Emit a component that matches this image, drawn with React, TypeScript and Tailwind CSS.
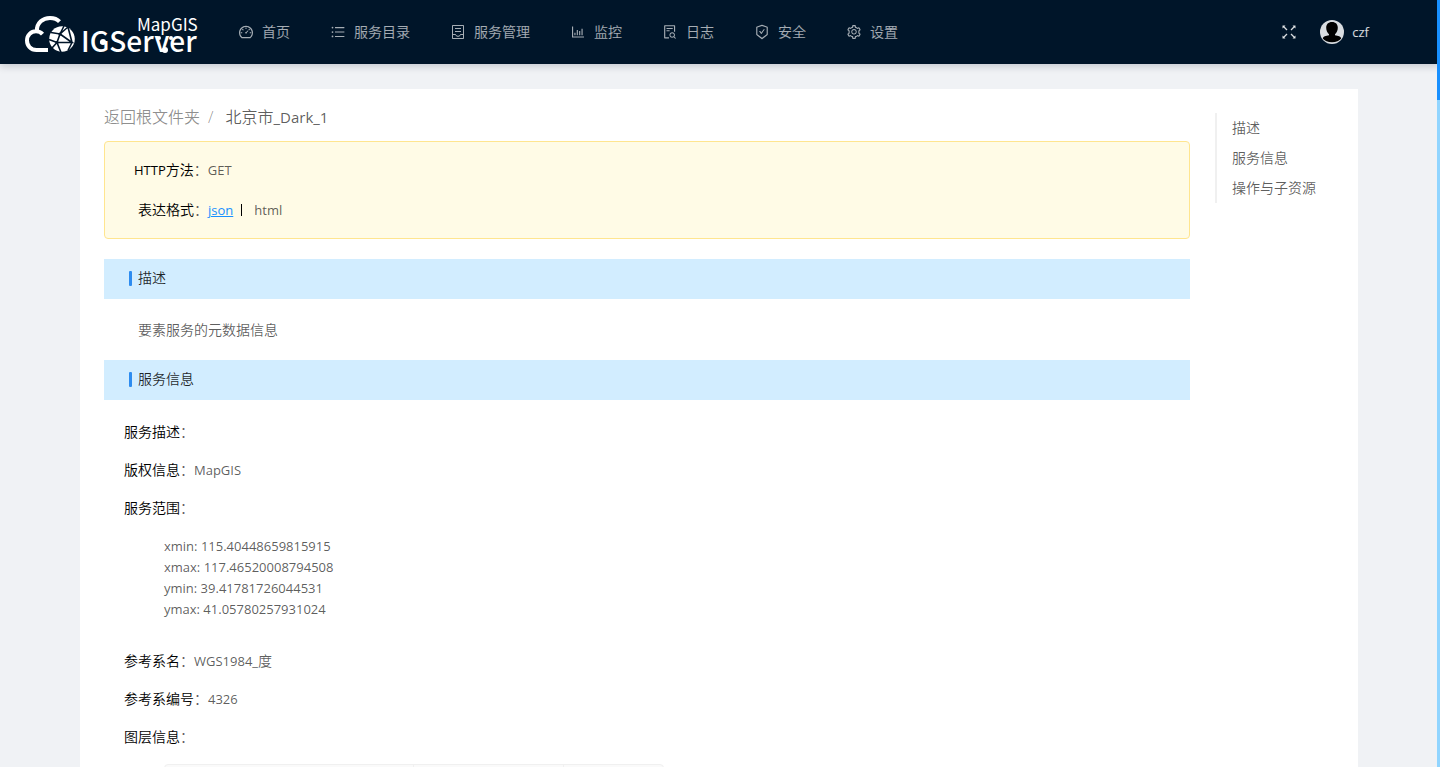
import {
  AiOutlineBarChart,
  AiOutlineDashboard,
  AiOutlineFileSearch,
  AiOutlineSafetyCertificate,
  AiOutlineSetting,
  AiOutlineUnorderedList,
} from "react-icons/ai";
import type { ReactNode } from "react";

function ServiceIcon() {
  return (
    <svg width="16" height="16" viewBox="0 0 16 16" fill="none" stroke="currentColor" aria-hidden="true">
      <path d="M2.500 1.500h11v13h-11z" />
      <path d="M5 4.500h6M5 7.500h6M3 10.500h2.500l1.200 1.700h2.600l1.200-1.700H13" />
    </svg>
  );
}

function FullscreenIcon() {
  return (
    <svg width="14" height="14" viewBox="0 0 14 14" fill="none" stroke="currentColor" strokeWidth="1.300" aria-hidden="true">
      <path d="M1.500 1.500l3.500 3.500M12.500 1.500L9 5M1.500 12.500L5 9M12.500 12.500L9 9" />
      <path d="M.5.500h3L.5 3.500zM13.500.500v3l-3-3zM.5 13.500v-3l3 3zM13.500 13.500h-3l3-3z" fill="currentColor" stroke="none" />
    </svg>
  );
}

function Avatar() {
  return (
    <svg width="24" height="24" viewBox="0 0 24 24" aria-hidden="true">
      <circle cx="12" cy="12" r="12" fill="#d9dde1" />
      <path d="M12 2c3.800 0 5.800 2.300 5.800 5.800 0 2.800-1.200 5-2.800 6.400v1c3 .5 6.200 1.200 6.200 3.400C19.600 21 16 22.300 12 22.300S4.400 21 2.800 18.600c0-2.200 3.200-2.900 6.200-3.400v-1C7.400 12.800 6.200 10.600 6.200 7.800 6.200 4.300 8.200 2 12 2z" fill="#000" />
    </svg>
  );
}

function Logo() {
  return (
    <svg width="176" height="56" viewBox="0 0 176 56" fill="#fff" aria-label="MapGIS IGServer" role="img">
      <path d="M24 46H12.500C6.500 46 3 41.500 3 36.500 3 31 7 27.300 12 27.300c2.800 0 5 1 6.500 2.800M12.800 27C12.800 18.500 19 14 26 14c4.500 0 7.500 1.400 9.500 3.600" fill="none" stroke="#fff" strokeWidth="4" />
      <circle cx="38" cy="35" r="12.800" />
      <path d="M27 28.500l9 1.500 8-7M36 30l-3 8.500-8-3M36 30l12 8.500-15 0 4 10M40 22l-4 8M48 38.500l-4 8M44 23l4 15.500M33 38.500l-5 5.500" stroke="#001529" strokeWidth="1.600" fill="none" />
      <circle cx="36" cy="30" r="1.600" fill="#001529" />
      <circle cx="33" cy="38.500" r="1.600" fill="#001529" />
      <text x="113" y="27" fontFamily="'Noto Sans CJK SC', sans-serif" fontSize="17" fontWeight="400">MapGIS</text>
      <text x="57" y="48" fontFamily="'Noto Sans CJK SC', sans-serif" fontSize="28" fontWeight="500">IGServer</text>
      <circle cx="79" cy="38" r="3" />
      <circle cx="141" cy="46" r="3" />
      <circle cx="135" cy="34" r="2" />
      <circle cx="147" cy="34" r="2" />
    </svg>
  );
}

const navItems: { label: string; icon: ReactNode }[] = [
  { label: "首页", icon: <AiOutlineDashboard size={16} /> },
  { label: "服务目录", icon: <AiOutlineUnorderedList size={16} /> },
  { label: "服务管理", icon: <ServiceIcon /> },
  { label: "监控", icon: <AiOutlineBarChart size={16} /> },
  { label: "日志", icon: <AiOutlineFileSearch size={16} /> },
  { label: "安全", icon: <AiOutlineSafetyCertificate size={16} /> },
  { label: "设置", icon: <AiOutlineSetting size={16} /> },
];

const extent = [
  "xmin: 115.40448659815915",
  "xmax: 117.46520008794508",
  "ymin: 39.41781726044531",
  "ymax: 41.05780257931024",
];

function Header() {
  return (
    <header className="relative flex h-16 items-center bg-[#001529] pr-[71px] pl-6 text-sm text-white/65 shadow-[0_2px_8px_rgba(0,21,41,0.2)]">
      <a href="#home" className="shrink-0 text-white">
        <Logo />
      </a>
      <nav className="ml-[38px] flex items-center gap-10">
        {navItems.map((item) => (
          <a key={item.label} href="#nav" className="flex items-center gap-2 whitespace-nowrap">
            {item.icon}
            {item.label}
          </a>
        ))}
      </nav>
      <div className="ml-auto flex items-center text-white/85">
        <button type="button" aria-label="全屏">
          <FullscreenIcon />
        </button>
        <button type="button" className="ml-6 flex items-center gap-2 text-[13px] font-normal">
          <Avatar />
          czf
        </button>
      </div>
    </header>
  );
}

function SectionTitle({ id, children }: { id: string; children: ReactNode }) {
  return (
    <h2 id={id} className="flex h-10 items-center gap-1.5 bg-[#d2edff] pb-0.5 pl-[25px] text-sm text-black/85">
      <span className="h-[15px] w-[3px] rounded-[1px] bg-[#2d8cf0]" />
      {children}
    </h2>
  );
}

function Field({ label, children }: { label: string; children?: ReactNode }) {
  return (
    <div className="flex h-[38px] items-center">
      <dt className="text-black">
        {label}
        <span className="text-black/65">：</span>
      </dt>
      <dd className="text-[13px] font-normal">{children}</dd>
    </div>
  );
}

export default function App() {
  return (
    <div className="h-screen overflow-hidden bg-[#f0f2f5] font-['Open_Sans','Noto_Sans_CJK_SC',sans-serif] text-sm font-[350] text-black/65">
      <Header />
      <div className="absolute top-0 right-0 h-full w-[3px] bg-[#91d5ff]">
        <div className="h-[100px] bg-[#1890ff]" />
      </div>
      <main className="mt-[25px] mr-[82px] ml-20 flex min-h-[900px] bg-white pt-4 pl-6">
        <div className="min-w-0 flex-1">
          <nav className="flex h-6 items-center text-base text-black/45">
            <a href="#root-folder">返回根文件夹</a>
            <span className="mx-2">/</span>
            <span className="ml-1 text-black/65">
              北京市<span className="text-[15px] font-normal">_Dark_1</span>
            </span>
          </nav>
          <section className="mt-3 rounded-[4px] border border-[#ffe58f] bg-[#fffbe6] py-2 text-[13px] font-normal">
            <div className="flex h-10 items-center pl-[29px]">
              <span className="text-black">
                HTTP<span className="text-sm font-[350]">方法</span>
              </span>
              <span className="text-sm font-[350]">：</span>GET
            </div>
            <div className="flex h-10 items-center pl-[33px]">
              <span className="text-sm font-[350] text-black">表达格式</span>
              <span className="text-sm font-[350]">：</span>
              <a href="#json" className="text-[#1890ff] underline">
                json
              </a>
              <span className="mx-2 h-3 w-px bg-black" />
              <a href="#html" className="ml-1">
                html
              </a>
            </div>
          </section>
          <div className="mt-5">
            <SectionTitle id="description">描述</SectionTitle>
            <p className="flex h-[61px] items-center pl-[34px]">要素服务的元数据信息</p>
            <SectionTitle id="service">服务信息</SectionTitle>
          </div>
          <dl className="pt-[13px] pl-5">
            <Field label="服务描述" />
            <Field label="版权信息">MapGIS</Field>
            <Field label="服务范围" />
            <dd className="mt-[9px] mb-[22px] pl-10 text-[13px] leading-[21px] font-normal">
              <ul>
                {extent.map((line) => (
                  <li key={line}>{line}</li>
                ))}
              </ul>
            </dd>
            <Field label="参考系名">
              WGS1984_<span className="text-sm font-[350]">度</span>
            </Field>
            <Field label="参考系编号">4326</Field>
            <Field label="图层信息" />
            <dd className="mt-2 ml-10">
              <table className="w-[500px] table-fixed border-separate border-spacing-0 rounded-t-[4px] border border-[#f0f0f0] bg-[#fafafa]">
                <thead>
                  <tr className="h-10">
                    <th className="w-[249px] border-r border-[#f0f0f0]" />
                    <th className="w-[150px] border-r border-[#f0f0f0]" />
                    <th />
                  </tr>
                </thead>
              </table>
            </dd>
          </dl>
        </div>
        <aside className="ml-[25px] w-[143px] shrink-0 pt-2">
          <nav className="flex flex-col border-l-2 border-[#f0f0f0] pl-[15px] leading-[30px]">
            <a href="#description">描述</a>
            <a href="#service">服务信息</a>
            <a href="#operations">操作与子资源</a>
          </nav>
        </aside>
      </main>
    </div>
  );
}
